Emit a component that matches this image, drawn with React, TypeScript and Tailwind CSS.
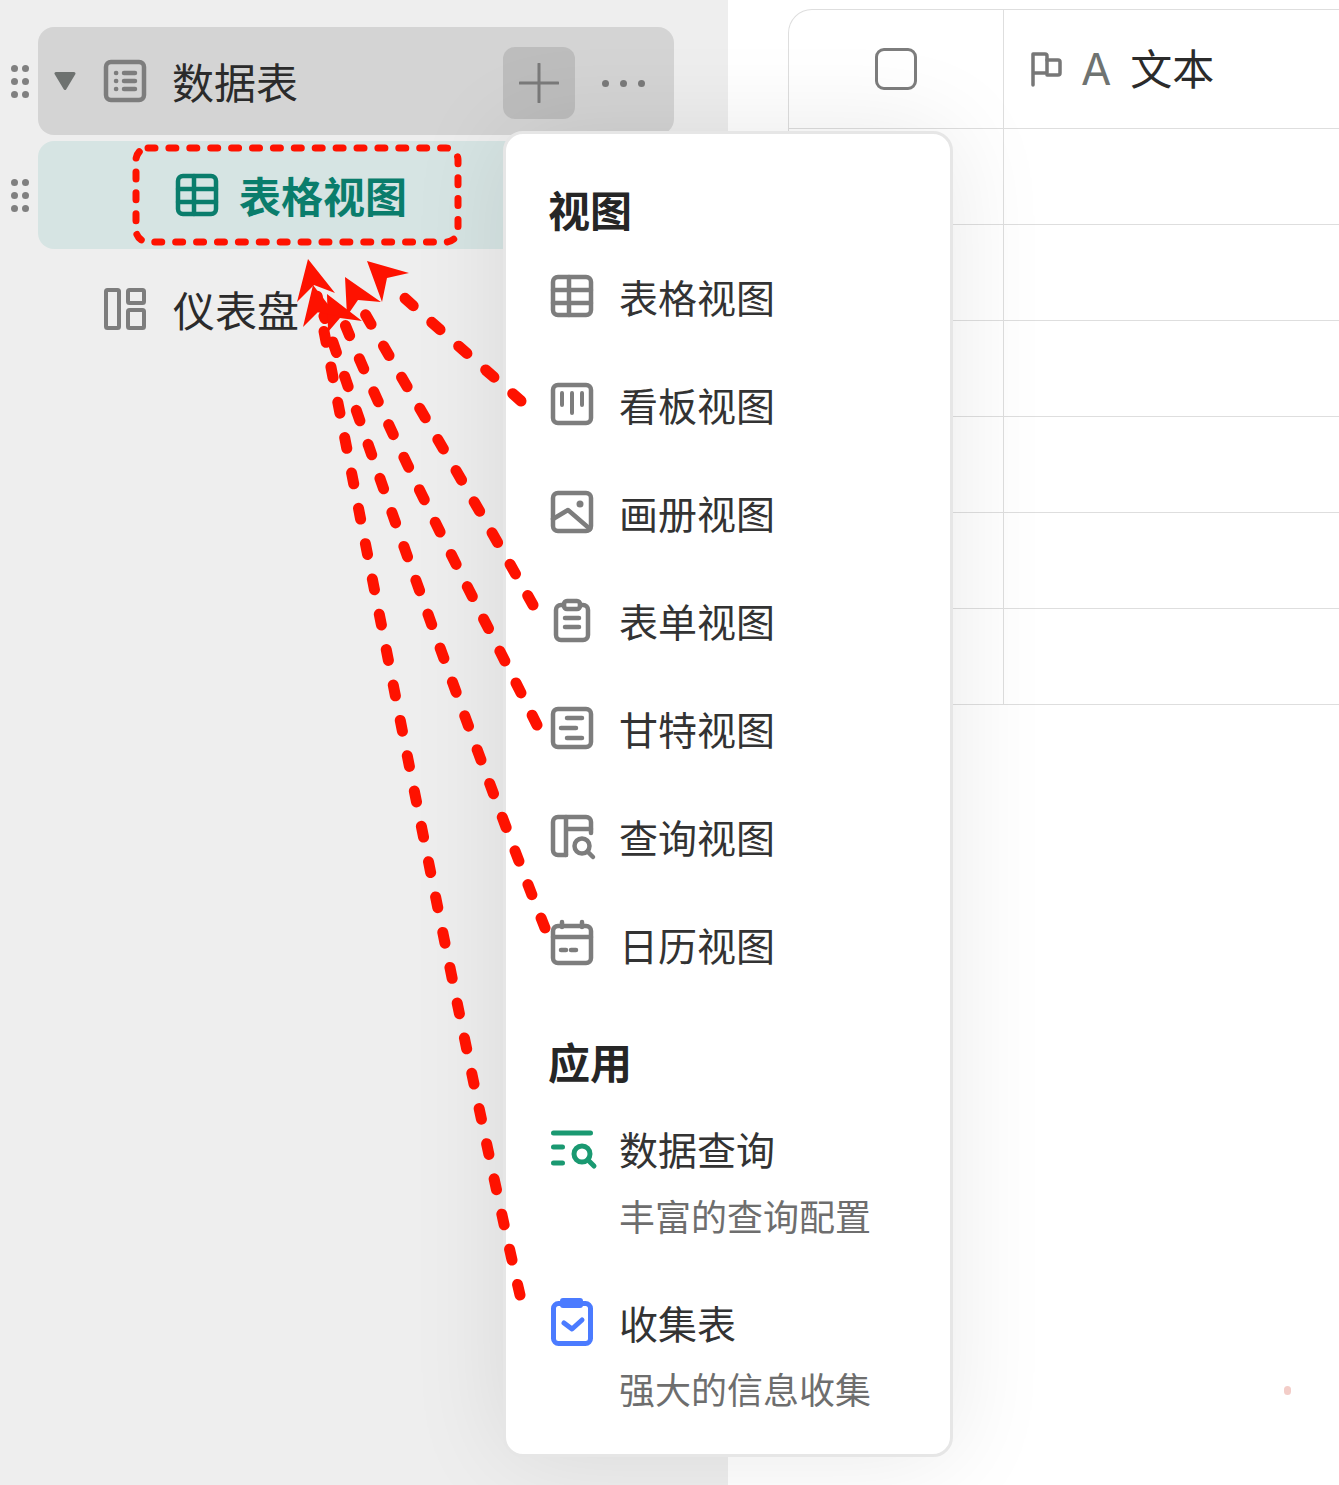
import type { ReactNode } from "react";

const GRAY = "#7d7d7d";

function Icon({ children, h = 42, color = GRAY, sw = 4.5 }: { children: ReactNode; h?: number; color?: string; sw?: number }) {
  return (
    <svg width="46" height={h} viewBox={`0 0 46 ${h}`} fill="none" stroke={color} strokeWidth={sw} strokeLinecap="round" strokeLinejoin="round" className="shrink-0 overflow-visible">
      {children}
    </svg>
  );
}

const TableIcon = ({ color = GRAY }: { color?: string }) => (
  <Icon color={color}>
    <rect x="2" y="2" width="38" height="38" rx="5" />
    <path d="M2 15h38M2 28h38M18 2v38" />
  </Icon>
);

const views: { name: string; icon: ReactNode }[] = [
  { name: "表格视图", icon: <TableIcon /> },
  {
    name: "看板视图",
    icon: (
      <Icon>
        <rect x="2" y="2" width="38" height="38" rx="5" />
        <path d="M11 10v12M21 10v20M31 10v12" strokeWidth="4" />
      </Icon>
    ),
  },
  {
    name: "画册视图",
    icon: (
      <Icon>
        <rect x="2" y="2" width="38" height="38" rx="5" />
        <path d="M2 28l15-9 22 19" />
        <circle cx="29" cy="13" r="3.5" fill={GRAY} stroke="none" />
      </Icon>
    ),
  },
  {
    name: "表单视图",
    icon: (
      <Icon>
        <path d="M13 6h-3a5 5 0 0 0-5 5v25a5 5 0 0 0 5 5h22a5 5 0 0 0 5-5V11a5 5 0 0 0-5-5h-3" />
        <rect x="13" y="2" width="16" height="8" rx="3" />
        <path d="M14 19h14M14 28h14" />
      </Icon>
    ),
  },
  {
    name: "甘特视图",
    icon: (
      <Icon>
        <rect x="2" y="2" width="38" height="38" rx="5" />
        <path d="M16 11h15M10 21h15M16 31h15" />
      </Icon>
    ),
  },
  {
    name: "查询视图",
    icon: (
      <Icon>
        <path d="M15 40H7a5 5 0 0 1-5-5V7a5 5 0 0 1 5-5h28a5 5 0 0 1 5 5v11" />
        <path d="M15 2v38M15 14h25" />
        <circle cx="31" cy="31" r="7.5" />
        <path d="M37 37l5 5" />
      </Icon>
    ),
  },
  {
    name: "日历视图",
    icon: (
      <Icon h={44}>
        <rect x="2" y="4" width="38" height="37" rx="5" />
        <path d="M2 15h38M11 0v5M31 0v5M10 28h5M20 28h5" />
      </Icon>
    ),
  },
];

const tailPaths = [
  "M521 401 C480 365 440 330 398 292",
  "M533 605 C480 510 420 410 364 312",
  "M537 725 C480 610 400 460 344 322",
  "M545 928 C490 790 400 540 324 316",
  "M520 1295 C470 1080 380 620 316 290",
];

const heads = [
  "367,261 409,273 387,278 382,302",
  "345,277 381,302 358,300 347,316",
  "327,294 362,321 340,318 328,332",
  "313,285 337,316 318,312 303,327",
  "308,259 335,293 314,285 297,302",
];

function Handle() {
  return (
    <div className="w-[28px] shrink-0 pl-[1px] grid grid-cols-[7px_7px] gap-x-[4px] gap-y-[6px] justify-start content-center">
      {[0, 1, 2, 3, 4, 5].map((i) => (
        <span key={i} className="w-[7px] h-[7px] rounded-full bg-[#808080]" />
      ))}
    </div>
  );
}

function Sidebar() {
  return (
    <div className="w-[728px] shrink-0 bg-[#eeeeee] pt-[27px] pl-[10px] flex flex-col gap-[6px]">
      <div className="flex h-[108px]">
        <Handle />
        <div className="w-[636px] flex items-center rounded-[16px] bg-[#d4d4d4] pl-[16px] pr-[29px]">
          <svg width="22" height="18" viewBox="0 0 22 18" className="shrink-0">
            <path d="M2 1.5h18L11 16.5z" fill="#6e7270" stroke="#6e7270" strokeWidth="3" strokeLinejoin="round" />
          </svg>
          <div className="ml-[28px] w-[42px]">
            <Icon>
              <rect x="2" y="2" width="38" height="38" rx="5" />
              <path d="M12 13h.2M12 21h.2M12 29h.2M20 13h11M20 21h11M20 29h11" />
            </Icon>
          </div>
          <span className="ml-[26px] text-[42px] leading-[54px] text-[#2b2b2b]">数据表</span>
          <div className="ml-auto mt-[4px] w-[72px] h-[72px] rounded-[12px] bg-[#bdbdbd] flex items-center justify-center">
            <svg width="40" height="40" viewBox="0 0 40 40" stroke="#7a7a7a" strokeWidth="3" strokeLinecap="round">
              <path d="M20 1v38M1 20h38" />
            </svg>
          </div>
          <div className="ml-[27px] mt-[4px] flex gap-[11px]">
            <span className="w-[7px] h-[7px] rounded-full bg-[#7a7a7a]" />
            <span className="w-[7px] h-[7px] rounded-full bg-[#7a7a7a]" />
            <span className="w-[7px] h-[7px] rounded-full bg-[#7a7a7a]" />
          </div>
        </div>
      </div>
      <div className="flex h-[108px]">
        <Handle />
        <div className="w-[636px] flex items-center rounded-[16px] bg-[#d6e4e3] pl-[138px]">
          <div className="w-[42px]">
            <TableIcon color="#0a7d6c" />
          </div>
          <span className="ml-[21px] text-[42px] leading-[54px] font-bold text-[#0a7d6c]">表格视图</span>
        </div>
      </div>
      <div className="flex h-[108px] pl-[28px]">
        <div className="flex items-center pl-[66px]">
          <div className="w-[42px]">
            <Icon sw={4}>
              <rect x="2" y="2" width="13" height="38" rx="1.5" />
              <rect x="24" y="2" width="16" height="13" rx="1.5" />
              <rect x="24" y="22" width="16" height="18" rx="1.5" />
            </Icon>
          </div>
          <span className="ml-[27px] text-[42px] leading-[54px] text-[#2b2b2b]">仪表盘</span>
        </div>
      </div>
    </div>
  );
}

function TableArea() {
  return (
    <div className="flex-1 pl-[60px] pt-[9px] min-w-0">
      <div className="border-l border-t border-[#dedede] rounded-tl-[24px]">
        <div className="grid grid-cols-[215px_1fr] h-[119px] border-b border-[#dedede]">
          <div className="flex items-center justify-center border-r border-[#dedede]">
            <span className="w-[42px] h-[42px] rounded-[9px] border-[3px] border-[#7d7d7d]" />
          </div>
          <div className="flex items-center pl-[26px]">
            <svg width="34" height="36" viewBox="0 0 34 36" fill="none" stroke="#777777" strokeWidth="3.5" strokeLinecap="round" strokeLinejoin="round" className="shrink-0">
              <path d="M3 34V3h12a2 2 0 0 1 2 2v17H3" />
              <path d="M17 9h11a2 2 0 0 1 2 2v11a2 2 0 0 1-2 2H17" />
            </svg>
            <span className="ml-[17px] text-[44px] leading-[54px] font-['Inter',sans-serif] font-normal text-[#6f7371]">A</span>
            <span className="ml-[19px] mb-[4px] text-[42px] leading-[54px] text-[#2b2b2b]">文本</span>
          </div>
        </div>
        {[0, 1, 2, 3, 4, 5].map((i) => (
          <div key={i} className="grid grid-cols-[215px_1fr] h-[96px] border-b border-[#dedede]">
            <div className="border-r border-[#dedede]" />
            <div />
          </div>
        ))}
      </div>
    </div>
  );
}

function ViewMenu() {
  return (
    <div className="absolute left-[503px] top-[131px] w-[450px] h-[1326px] rounded-[20px] border-[3px] border-[#e6e6e6] bg-white pl-[45px] pt-[44px] shadow-[0_0_100px_rgba(0,0,0,0.09)]">
      <div className="h-[64px] pb-[4px] -ml-[3px] flex items-center text-[42px] font-bold text-[#262626]">视图</div>
      {views.map((v) => (
        <div key={v.name} className="h-[108px] flex items-center">
          <div className="w-[42px] shrink-0">{v.icon}</div>
          <span className="ml-[26px] text-[39px] leading-[54px] text-[#333333]">{v.name}</span>
        </div>
      ))}
      <div className="mt-[32px] h-[64px] pb-[4px] -ml-[3px] flex items-center text-[42px] font-bold text-[#262626]">应用</div>
      <div className="pt-[27px] flex">
        <div className="w-[42px] shrink-0 pt-[9px]">
          <Icon color="#1a9971" sw={5}>
            <path d="M2.5 3h37M2.5 17h9M2.5 33h9" />
            <circle cx="31" cy="24" r="8" />
            <path d="M37 30l6 6" />
          </Icon>
        </div>
        <div className="ml-[26px]">
          <div className="text-[39px] leading-[54px] text-[#333333]">数据查询</div>
          <div className="mt-[13px] text-[36px] leading-[54px] text-[#6e6e6e]">丰富的查询配置</div>
        </div>
      </div>
      <div className="mt-[53px] flex">
        <div className="w-[42px] shrink-0 pt-[3px]">
          <Icon h={48} color="#4b7bff" sw={5}>
            <rect x="2.5" y="5.5" width="37" height="40" rx="5" />
            <rect x="9" y="0" width="23" height="10" rx="3" fill="#4b7bff" stroke="none" />
            <path d="M13 25l8 6 10-9" />
          </Icon>
        </div>
        <div className="ml-[26px]">
          <div className="text-[39px] leading-[54px] text-[#333333]">收集表</div>
          <div className="mt-[12px] text-[36px] leading-[54px] text-[#6e6e6e]">强大的信息收集</div>
        </div>
      </div>
    </div>
  );
}

export default function App() {
  return (
    <div className="relative flex h-[1485px] overflow-hidden bg-white font-['Noto_Sans_CJK_SC','Noto_Sans',sans-serif]">
      <Sidebar />
      <TableArea />
      <ViewMenu />

      {/* red annotation drawn on top of the screenshot */}
      <svg className="absolute inset-0 pointer-events-none" width="1339" height="1485" viewBox="0 0 1339 1485" fill="none">
        <rect x="136" y="148" width="322" height="94" rx="12" stroke="#fe1200" strokeWidth="7" strokeLinecap="round" strokeDasharray="7 13.9" />
        {tailPaths.map((d) => (
          <path key={d} d={d} stroke="#fe1200" strokeWidth="11" strokeLinecap="round" strokeDasharray="11 25" />
        ))}
        {heads.map((p) => (
          <polygon key={p} points={p} fill="#fe1200" />
        ))}
      </svg>

      <span className="absolute left-[1284px] top-[1386px] w-[7px] h-[9px] rounded-full bg-[#f3cdc8]" />
    </div>
  );
}
